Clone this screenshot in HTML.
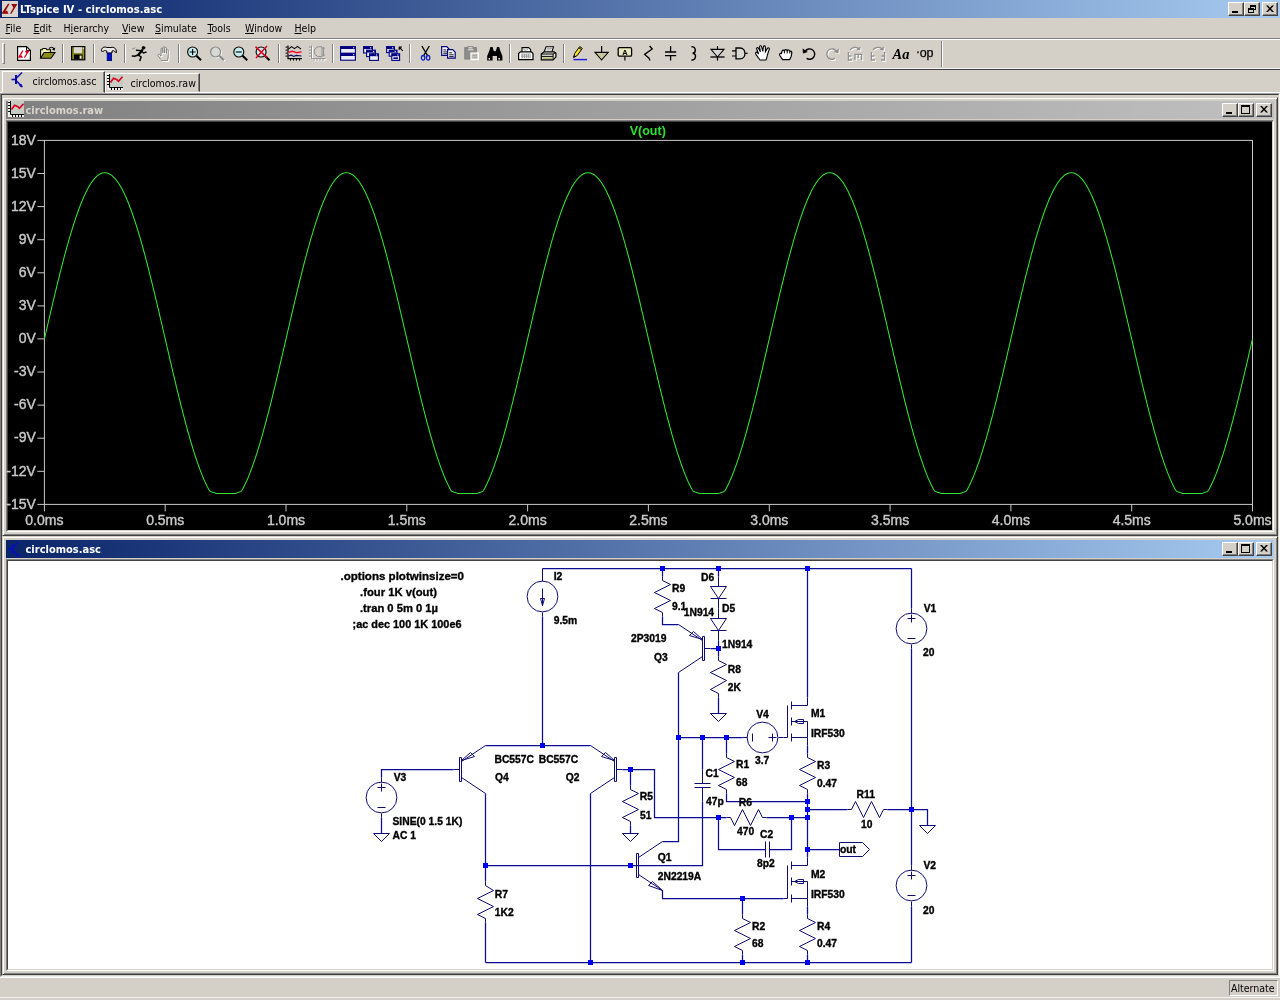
<!DOCTYPE html><html><head><meta charset="utf-8"><title>LTspice IV - circlomos.asc</title><style>

html,body{margin:0;padding:0}
body{width:1280px;height:1000px;overflow:hidden;background:#d4d0c8;position:relative;font-family:"DejaVu Sans Condensed","Liberation Sans",sans-serif;font-size:10.5px;color:#000}
.abs{position:absolute}
.t{position:absolute;white-space:pre;line-height:1}
.tb{position:absolute;left:0;top:0;width:1280px;height:18px;background:linear-gradient(90deg,#0a246a 0%,#a6caf0 100%)}
.btn{position:absolute;width:16px;height:14px;background:#d4d0c8;box-sizing:border-box;border:1px solid;border-color:#fff #404040 #404040 #fff;box-shadow:inset -1px -1px 0 #808080}
.menu span{position:absolute;top:22px;white-space:pre;line-height:12px}
u{text-decoration:underline}
.sep{position:absolute;top:44px;width:1px;height:19px;background:#808080;border-right:1px solid #fff}
svg{position:absolute;left:0;top:0;overflow:visible}
.sch text{font-family:"Liberation Sans",sans-serif;font-weight:bold;font-size:10.3px;fill:#000;stroke:#000;stroke-width:.35px}
.sch text.d{font-size:11.6px}

</style></head><body><div id="root" style="position:absolute;left:0;top:0;width:1280px;height:1000px;overflow:hidden;will-change:transform">
<div class="tb"></div>
<div class="t" style="left:20px;top:4px;font-weight:bold;font-size:11.2px;color:#fff">LTspice IV - circlomos.asc</div>
<div class="btn" style="left:1228px;top:2px"></div>
<div class="btn" style="left:1244px;top:2px"></div>
<div class="btn" style="left:1262px;top:2px"></div>
<div class="menu">
<span style="left:5.5px"><u>F</u>ile</span>
<span style="left:33.5px"><u>E</u>dit</span>
<span style="left:63.5px">H<u>i</u>erarchy</span>
<span style="left:122px"><u>V</u>iew</span>
<span style="left:155px"><u>S</u>imulate</span>
<span style="left:207.5px"><u>T</u>ools</span>
<span style="left:245px"><u>W</u>indow</span>
<span style="left:294.5px"><u>H</u>elp</span>
</div>
<div class="abs" style="left:0;top:38px;width:1280px;height:1px;background:#808080"></div>
<div class="abs" style="left:0;top:39px;width:1280px;height:1px;background:#fff"></div>
<div class="abs" style="left:0;top:68px;width:1280px;height:1px;background:#f4f4f0"></div>
<div class="abs" style="left:0;top:69px;width:1280px;height:1px;background:#404040"></div>
<div class="abs" style="left:2px;top:43px;width:3px;height:21px;box-sizing:border-box;border:1px solid;border-color:#fff #808080 #808080 #fff"></div>
<div class="abs" style="left:941px;top:41px;width:1px;height:26px;background:#808080;border-right:1px solid #fff"></div>
<div class="sep" style="left:62px"></div>
<div class="sep" style="left:93px"></div>
<div class="sep" style="left:124px"></div>
<div class="sep" style="left:178px"></div>
<div class="sep" style="left:278px"></div>
<div class="sep" style="left:332px"></div>
<div class="sep" style="left:409px"></div>
<div class="sep" style="left:509px"></div>
<div class="sep" style="left:563px"></div>
<div class="abs" style="left:0;top:92px;width:1280px;height:1px;background:#fff"></div>
<div class="abs" style="left:105px;top:73px;width:95px;height:19px;box-sizing:border-box;border:1px solid;border-color:#fff #404040 #d4d0c8 #fff;box-shadow:inset -1px 0 0 #808080;background:#d4d0c8"></div>
<div class="abs" style="left:2px;top:71px;width:103px;height:22px;box-sizing:border-box;border:1px solid;border-color:#fff #404040 #d4d0c8 #fff;box-shadow:inset -1px 0 0 #808080;background:#d4d0c8"></div>
<div class="t" style="left:32.5px;top:76px;font-size:10.5px">circlomos.asc</div>
<div class="t" style="left:130.5px;top:78px;font-size:10.5px">circlomos.raw</div>
<div class="abs" style="left:0;top:93px;width:1280px;height:884px;box-sizing:border-box;border:1px solid;border-color:#a0a0a0 #fff #f0eeea #808080"></div>
<div class="abs" style="left:1px;top:94px;width:1278px;height:882px;box-sizing:border-box;border:1px solid;border-color:#404040 #d4d0c8 #d4d0c8 #404040;background:#d4d0c8"></div>
<div class="abs" style="left:2px;top:97px;width:1276px;height:439px;background:#d4d0c8;box-sizing:border-box;border:1px solid;border-color:#d4d0c8 #404040 #404040 #d4d0c8;box-shadow:inset 1px 1px 0 #fff,inset -1px -1px 0 #808080"></div>
<div class="abs" style="left:6px;top:101px;width:1268px;height:18px;background:linear-gradient(90deg,#808080,#c0c0c0)"></div>
<div class="t" style="left:25.5px;top:105px;font-weight:bold;font-size:11px;color:#d8d4cc">circlomos.raw</div>
<div class="btn" style="left:1222px;top:103px"></div>
<div class="btn" style="left:1238px;top:103px"></div>
<div class="btn" style="left:1256px;top:103px"></div>
<div class="abs" style="left:6px;top:120px;width:1268px;height:412px;box-sizing:border-box;border:1px solid;border-color:#808080 #fff #fff #808080"><div style="width:1266px;height:410px;box-sizing:border-box;border:1px solid;border-color:#404040 #d4d0c8 #d4d0c8 #404040;background:#000"></div></div>
<div class="abs" style="left:2px;top:536px;width:1276px;height:439px;background:#d4d0c8;box-sizing:border-box;border:1px solid;border-color:#d4d0c8 #404040 #404040 #d4d0c8;box-shadow:inset 1px 1px 0 #fff,inset -1px -1px 0 #808080"></div>
<div class="abs" style="left:6px;top:540px;width:1268px;height:18px;background:linear-gradient(90deg,#0a246a,#a6caf0)"></div>
<div class="t" style="left:25.5px;top:544px;font-weight:bold;font-size:11px;color:#fff">circlomos.asc</div>
<div class="btn" style="left:1222px;top:542px"></div>
<div class="btn" style="left:1238px;top:542px"></div>
<div class="btn" style="left:1256px;top:542px"></div>
<div class="abs" style="left:6px;top:559px;width:1268px;height:412px;box-sizing:border-box;border:1px solid;border-color:#808080 #fff #fff #808080"><div style="width:1266px;height:410px;box-sizing:border-box;border:1px solid;border-color:#404040 #d4d0c8 #d4d0c8 #404040;background:#fff"></div></div>
<div class="abs" style="left:0;top:977px;width:1280px;height:1px;background:#fff"></div>
<div class="abs" style="left:1229px;top:980px;width:49px;height:16px;box-sizing:border-box;border:1px solid;border-color:#808080 #fff #fff #808080"></div>
<div class="t" style="left:1231px;top:982.5px;font-size:10.5px">Alternate</div>
<div class="abs" style="left:0;top:997px;width:1280px;height:1px;background:#f4f4f2"></div>
<svg width="1280" height="1000" viewBox="0 0 1280 1000">
<g fill="none" stroke="#c8c8c8" stroke-width="1">
<rect x="44.4" y="140.4" width="1208.1" height="364.0"/>
<path d="M37.4 140.4H44.4M37.4 173.5H44.4M37.4 206.6H44.4M37.4 239.7H44.4M37.4 272.8H44.4M37.4 305.9H44.4M37.4 338.9H44.4M37.4 372.0H44.4M37.4 405.1H44.4M37.4 438.2H44.4M37.4 471.3H44.4M37.4 504.4H44.4M44.4 504.4V511.4M165.2 504.4V511.4M286.0 504.4V511.4M406.8 504.4V511.4M527.6 504.4V511.4M648.4 504.4V511.4M769.3 504.4V511.4M890.1 504.4V511.4M1010.9 504.4V511.4M1131.7 504.4V511.4M1252.5 504.4V511.4"/></g>
<path d="M44.4 338.9L45.3 335.2L46.1 331.5L47.0 327.8L47.9 324.0L48.7 320.3L49.6 316.6L50.4 312.9L51.3 309.3L52.2 305.6L53.0 302.0L53.9 298.3L54.8 294.7L55.6 291.1L56.5 287.6L57.3 284.0L58.2 280.5L59.1 277.1L59.9 273.6L60.8 270.2L61.7 266.8L62.5 263.5L63.4 260.2L64.2 256.9L65.1 253.7L66.0 250.5L66.8 247.4L67.7 244.3L68.6 241.2L69.4 238.2L70.3 235.3L71.2 232.4L72.0 229.6L72.9 226.8L73.7 224.1L74.6 221.4L75.5 218.8L76.3 216.3L77.2 213.8L78.1 211.3L78.9 209.0L79.8 206.7L80.6 204.5L81.5 202.3L82.4 200.2L83.2 198.2L84.1 196.2L85.0 194.4L85.8 192.6L86.7 190.8L87.5 189.2L88.4 187.6L89.3 186.1L90.1 184.7L91.0 183.3L91.9 182.0L92.7 180.9L93.6 179.7L94.4 178.7L95.3 177.8L96.2 176.9L97.0 176.1L97.9 175.4L98.8 174.8L99.6 174.2L100.5 173.8L101.4 173.4L102.2 173.1L103.1 172.9L103.9 172.8L104.8 172.7L105.7 172.8L106.5 172.9L107.4 173.1L108.3 173.4L109.1 173.8L110.0 174.2L110.8 174.8L111.7 175.4L112.6 176.1L113.4 176.9L114.3 177.8L115.2 178.7L116.0 179.7L116.9 180.9L117.7 182.0L118.6 183.3L119.5 184.7L120.3 186.1L121.2 187.6L122.1 189.2L122.9 190.8L123.8 192.6L124.7 194.4L125.5 196.2L126.4 198.2L127.2 200.2L128.1 202.3L129.0 204.5L129.8 206.7L130.7 209.0L131.6 211.3L132.4 213.8L133.3 216.3L134.1 218.8L135.0 221.4L135.9 224.1L136.7 226.8L137.6 229.6L138.5 232.4L139.3 235.3L140.2 238.2L141.0 241.2L141.9 244.3L142.8 247.4L143.6 250.5L144.5 253.7L145.4 256.9L146.2 260.2L147.1 263.5L148.0 266.8L148.8 270.2L149.7 273.6L150.5 277.1L151.4 280.5L152.3 284.0L153.1 287.6L154.0 291.1L154.9 294.7L155.7 298.3L156.6 302.0L157.4 305.6L158.3 309.3L159.2 312.9L160.0 316.6L160.9 320.3L161.8 324.0L162.6 327.8L163.5 331.5L164.3 335.2L165.2 338.9L166.1 342.7L166.9 346.4L167.8 350.1L168.7 353.8L169.5 357.6L170.4 361.3L171.3 364.9L172.1 368.6L173.0 372.3L173.8 375.9L174.7 379.6L175.6 383.2L176.4 386.8L177.3 390.3L178.2 393.8L179.0 397.4L179.9 400.8L180.7 404.3L181.6 407.7L182.5 411.1L183.3 414.4L184.2 417.7L185.1 421.0L185.9 424.2L186.8 427.4L187.6 430.5L188.5 433.6L189.4 436.7L190.2 439.6L191.1 442.6L192.0 445.5L192.8 448.3L193.7 451.1L194.5 453.8L195.4 456.5L196.3 459.1L197.1 461.6L198.0 464.1L198.9 466.5L199.7 468.9L200.6 471.2L201.5 473.4L202.3 475.6L203.2 477.7L204.0 479.7L204.9 481.6L205.8 483.5L206.6 485.3L207.5 487.1L208.4 488.7L209.2 490.3L210.1 491.3L210.9 491.6L211.8 491.9L212.7 492.2L213.5 492.5L214.4 492.8L215.3 493.1L216.1 493.4L217.0 493.5L217.8 493.5L218.7 493.5L219.6 493.5L220.4 493.5L221.3 493.5L222.2 493.5L223.0 493.5L223.9 493.5L224.8 493.5L225.6 493.5L226.5 493.5L227.3 493.5L228.2 493.5L229.1 493.5L229.9 493.5L230.8 493.5L231.7 493.5L232.5 493.5L233.4 493.5L234.2 493.5L235.1 493.5L236.0 493.2L236.8 492.9L237.7 492.6L238.6 492.3L239.4 492.0L240.3 491.7L241.1 491.4L242.0 490.3L242.9 488.7L243.7 487.1L244.6 485.3L245.5 483.5L246.3 481.6L247.2 479.7L248.1 477.7L248.9 475.6L249.8 473.4L250.6 471.2L251.5 468.9L252.4 466.5L253.2 464.1L254.1 461.6L255.0 459.1L255.8 456.5L256.7 453.8L257.5 451.1L258.4 448.3L259.3 445.5L260.1 442.6L261.0 439.6L261.9 436.7L262.7 433.6L263.6 430.5L264.4 427.4L265.3 424.2L266.2 421.0L267.0 417.7L267.9 414.4L268.8 411.1L269.6 407.7L270.5 404.3L271.4 400.8L272.2 397.4L273.1 393.8L273.9 390.3L274.8 386.8L275.7 383.2L276.5 379.6L277.4 375.9L278.3 372.3L279.1 368.6L280.0 364.9L280.8 361.3L281.7 357.6L282.6 353.8L283.4 350.1L284.3 346.4L285.2 342.7L286.0 338.9L286.9 335.2L287.7 331.5L288.6 327.8L289.5 324.0L290.3 320.3L291.2 316.6L292.1 312.9L292.9 309.3L293.8 305.6L294.6 302.0L295.5 298.3L296.4 294.7L297.2 291.1L298.1 287.6L299.0 284.0L299.8 280.5L300.7 277.1L301.6 273.6L302.4 270.2L303.3 266.8L304.1 263.5L305.0 260.2L305.9 256.9L306.7 253.7L307.6 250.5L308.5 247.4L309.3 244.3L310.2 241.2L311.0 238.2L311.9 235.3L312.8 232.4L313.6 229.6L314.5 226.8L315.4 224.1L316.2 221.4L317.1 218.8L317.9 216.3L318.8 213.8L319.7 211.3L320.5 209.0L321.4 206.7L322.3 204.5L323.1 202.3L324.0 200.2L324.9 198.2L325.7 196.2L326.6 194.4L327.4 192.6L328.3 190.8L329.2 189.2L330.0 187.6L330.9 186.1L331.8 184.7L332.6 183.3L333.5 182.0L334.3 180.9L335.2 179.7L336.1 178.7L336.9 177.8L337.8 176.9L338.7 176.1L339.5 175.4L340.4 174.8L341.2 174.2L342.1 173.8L343.0 173.4L343.8 173.1L344.7 172.9L345.6 172.8L346.4 172.7L347.3 172.8L348.2 172.9L349.0 173.1L349.9 173.4L350.7 173.8L351.6 174.2L352.5 174.8L353.3 175.4L354.2 176.1L355.1 176.9L355.9 177.8L356.8 178.7L357.6 179.7L358.5 180.9L359.4 182.0L360.2 183.3L361.1 184.7L362.0 186.1L362.8 187.6L363.7 189.2L364.5 190.8L365.4 192.6L366.3 194.4L367.1 196.2L368.0 198.2L368.9 200.2L369.7 202.3L370.6 204.5L371.4 206.7L372.3 209.0L373.2 211.3L374.0 213.8L374.9 216.3L375.8 218.8L376.6 221.4L377.5 224.1L378.4 226.8L379.2 229.6L380.1 232.4L380.9 235.3L381.8 238.2L382.7 241.2L383.5 244.3L384.4 247.4L385.3 250.5L386.1 253.7L387.0 256.9L387.8 260.2L388.7 263.5L389.6 266.8L390.4 270.2L391.3 273.6L392.2 277.1L393.0 280.5L393.9 284.0L394.7 287.6L395.6 291.1L396.5 294.7L397.3 298.3L398.2 302.0L399.1 305.6L399.9 309.3L400.8 312.9L401.7 316.6L402.5 320.3L403.4 324.0L404.2 327.8L405.1 331.5L406.0 335.2L406.8 338.9L407.7 342.7L408.6 346.4L409.4 350.1L410.3 353.8L411.1 357.6L412.0 361.3L412.9 364.9L413.7 368.6L414.6 372.3L415.5 375.9L416.3 379.6L417.2 383.2L418.0 386.8L418.9 390.3L419.8 393.8L420.6 397.4L421.5 400.8L422.4 404.3L423.2 407.7L424.1 411.1L425.0 414.4L425.8 417.7L426.7 421.0L427.5 424.2L428.4 427.4L429.3 430.5L430.1 433.6L431.0 436.7L431.9 439.6L432.7 442.6L433.6 445.5L434.4 448.3L435.3 451.1L436.2 453.8L437.0 456.5L437.9 459.1L438.8 461.6L439.6 464.1L440.5 466.5L441.3 468.9L442.2 471.2L443.1 473.4L443.9 475.6L444.8 477.7L445.7 479.7L446.5 481.6L447.4 483.5L448.3 485.3L449.1 487.1L450.0 488.7L450.8 490.3L451.7 491.3L452.6 491.6L453.4 491.9L454.3 492.2L455.2 492.5L456.0 492.8L456.9 493.1L457.7 493.4L458.6 493.5L459.5 493.5L460.3 493.5L461.2 493.5L462.1 493.5L462.9 493.5L463.8 493.5L464.6 493.5L465.5 493.5L466.4 493.5L467.2 493.5L468.1 493.5L469.0 493.5L469.8 493.5L470.7 493.5L471.5 493.5L472.4 493.5L473.3 493.5L474.1 493.5L475.0 493.5L475.9 493.5L476.7 493.5L477.6 493.2L478.5 492.9L479.3 492.6L480.2 492.3L481.0 492.0L481.9 491.7L482.8 491.4L483.6 490.3L484.5 488.7L485.4 487.1L486.2 485.3L487.1 483.5L487.9 481.6L488.8 479.7L489.7 477.7L490.5 475.6L491.4 473.4L492.3 471.2L493.1 468.9L494.0 466.5L494.8 464.1L495.7 461.6L496.6 459.1L497.4 456.5L498.3 453.8L499.2 451.1L500.0 448.3L500.9 445.5L501.8 442.6L502.6 439.6L503.5 436.7L504.3 433.6L505.2 430.5L506.1 427.4L506.9 424.2L507.8 421.0L508.7 417.7L509.5 414.4L510.4 411.1L511.2 407.7L512.1 404.3L513.0 400.8L513.8 397.4L514.7 393.8L515.6 390.3L516.4 386.8L517.3 383.2L518.1 379.6L519.0 375.9L519.9 372.3L520.7 368.6L521.6 364.9L522.5 361.3L523.3 357.6L524.2 353.8L525.1 350.1L525.9 346.4L526.8 342.7L527.6 338.9L528.5 335.2L529.4 331.5L530.2 327.8L531.1 324.0L532.0 320.3L532.8 316.6L533.7 312.9L534.5 309.3L535.4 305.6L536.3 302.0L537.1 298.3L538.0 294.7L538.9 291.1L539.7 287.6L540.6 284.0L541.4 280.5L542.3 277.1L543.2 273.6L544.0 270.2L544.9 266.8L545.8 263.5L546.6 260.2L547.5 256.9L548.4 253.7L549.2 250.5L550.1 247.4L550.9 244.3L551.8 241.2L552.7 238.2L553.5 235.3L554.4 232.4L555.3 229.6L556.1 226.8L557.0 224.1L557.8 221.4L558.7 218.8L559.6 216.3L560.4 213.8L561.3 211.3L562.2 209.0L563.0 206.7L563.9 204.5L564.7 202.3L565.6 200.2L566.5 198.2L567.3 196.2L568.2 194.4L569.1 192.6L569.9 190.8L570.8 189.2L571.6 187.6L572.5 186.1L573.4 184.7L574.2 183.3L575.1 182.0L576.0 180.9L576.8 179.7L577.7 178.7L578.6 177.8L579.4 176.9L580.3 176.1L581.1 175.4L582.0 174.8L582.9 174.2L583.7 173.8L584.6 173.4L585.5 173.1L586.3 172.9L587.2 172.8L588.0 172.7L588.9 172.8L589.8 172.9L590.6 173.1L591.5 173.4L592.4 173.8L593.2 174.2L594.1 174.8L594.9 175.4L595.8 176.1L596.7 176.9L597.5 177.8L598.4 178.7L599.3 179.7L600.1 180.9L601.0 182.0L601.9 183.3L602.7 184.7L603.6 186.1L604.4 187.6L605.3 189.2L606.2 190.8L607.0 192.6L607.9 194.4L608.8 196.2L609.6 198.2L610.5 200.2L611.3 202.3L612.2 204.5L613.1 206.7L613.9 209.0L614.8 211.3L615.7 213.8L616.5 216.3L617.4 218.8L618.2 221.4L619.1 224.1L620.0 226.8L620.8 229.6L621.7 232.4L622.6 235.3L623.4 238.2L624.3 241.2L625.2 244.3L626.0 247.4L626.9 250.5L627.7 253.7L628.6 256.9L629.5 260.2L630.3 263.5L631.2 266.8L632.1 270.2L632.9 273.6L633.8 277.1L634.6 280.5L635.5 284.0L636.4 287.6L637.2 291.1L638.1 294.7L639.0 298.3L639.8 302.0L640.7 305.6L641.5 309.3L642.4 312.9L643.3 316.6L644.1 320.3L645.0 324.0L645.9 327.8L646.7 331.5L647.6 335.2L648.4 338.9L649.3 342.7L650.2 346.4L651.0 350.1L651.9 353.8L652.8 357.6L653.6 361.3L654.5 364.9L655.4 368.6L656.2 372.3L657.1 375.9L657.9 379.6L658.8 383.2L659.7 386.8L660.5 390.3L661.4 393.8L662.3 397.4L663.1 400.8L664.0 404.3L664.8 407.7L665.7 411.1L666.6 414.4L667.4 417.7L668.3 421.0L669.2 424.2L670.0 427.4L670.9 430.5L671.7 433.6L672.6 436.7L673.5 439.6L674.3 442.6L675.2 445.5L676.1 448.3L676.9 451.1L677.8 453.8L678.7 456.5L679.5 459.1L680.4 461.6L681.2 464.1L682.1 466.5L683.0 468.9L683.8 471.2L684.7 473.4L685.6 475.6L686.4 477.7L687.3 479.7L688.1 481.6L689.0 483.5L689.9 485.3L690.7 487.1L691.6 488.7L692.5 490.3L693.3 491.3L694.2 491.6L695.0 491.9L695.9 492.2L696.8 492.5L697.6 492.8L698.5 493.1L699.4 493.4L700.2 493.5L701.1 493.5L702.0 493.5L702.8 493.5L703.7 493.5L704.5 493.5L705.4 493.5L706.3 493.5L707.1 493.5L708.0 493.5L708.9 493.5L709.7 493.5L710.6 493.5L711.4 493.5L712.3 493.5L713.2 493.5L714.0 493.5L714.9 493.5L715.8 493.5L716.6 493.5L717.5 493.5L718.3 493.5L719.2 493.2L720.1 492.9L720.9 492.6L721.8 492.3L722.7 492.0L723.5 491.7L724.4 491.4L725.3 490.3L726.1 488.7L727.0 487.1L727.8 485.3L728.7 483.5L729.6 481.6L730.4 479.7L731.3 477.7L732.2 475.6L733.0 473.4L733.9 471.2L734.7 468.9L735.6 466.5L736.5 464.1L737.3 461.6L738.2 459.1L739.1 456.5L739.9 453.8L740.8 451.1L741.6 448.3L742.5 445.5L743.4 442.6L744.2 439.6L745.1 436.7L746.0 433.6L746.8 430.5L747.7 427.4L748.5 424.2L749.4 421.0L750.3 417.7L751.1 414.4L752.0 411.1L752.9 407.7L753.7 404.3L754.6 400.8L755.5 397.4L756.3 393.8L757.2 390.3L758.0 386.8L758.9 383.2L759.8 379.6L760.6 375.9L761.5 372.3L762.4 368.6L763.2 364.9L764.1 361.3L764.9 357.6L765.8 353.8L766.7 350.1L767.5 346.4L768.4 342.7L769.3 338.9L770.1 335.2L771.0 331.5L771.8 327.8L772.7 324.0L773.6 320.3L774.4 316.6L775.3 312.9L776.2 309.3L777.0 305.6L777.9 302.0L778.8 298.3L779.6 294.7L780.5 291.1L781.3 287.6L782.2 284.0L783.1 280.5L783.9 277.1L784.8 273.6L785.7 270.2L786.5 266.8L787.4 263.5L788.2 260.2L789.1 256.9L790.0 253.7L790.8 250.5L791.7 247.4L792.6 244.3L793.4 241.2L794.3 238.2L795.1 235.3L796.0 232.4L796.9 229.6L797.7 226.8L798.6 224.1L799.5 221.4L800.3 218.8L801.2 216.3L802.1 213.8L802.9 211.3L803.8 209.0L804.6 206.7L805.5 204.5L806.4 202.3L807.2 200.2L808.1 198.2L809.0 196.2L809.8 194.4L810.7 192.6L811.5 190.8L812.4 189.2L813.3 187.6L814.1 186.1L815.0 184.7L815.9 183.3L816.7 182.0L817.6 180.9L818.4 179.7L819.3 178.7L820.2 177.8L821.0 176.9L821.9 176.1L822.8 175.4L823.6 174.8L824.5 174.2L825.4 173.8L826.2 173.4L827.1 173.1L827.9 172.9L828.8 172.8L829.7 172.7L830.5 172.8L831.4 172.9L832.3 173.1L833.1 173.4L834.0 173.8L834.8 174.2L835.7 174.8L836.6 175.4L837.4 176.1L838.3 176.9L839.2 177.8L840.0 178.7L840.9 179.7L841.7 180.9L842.6 182.0L843.5 183.3L844.3 184.7L845.2 186.1L846.1 187.6L846.9 189.2L847.8 190.8L848.6 192.6L849.5 194.4L850.4 196.2L851.2 198.2L852.1 200.2L853.0 202.3L853.8 204.5L854.7 206.7L855.6 209.0L856.4 211.3L857.3 213.8L858.1 216.3L859.0 218.8L859.9 221.4L860.7 224.1L861.6 226.8L862.5 229.6L863.3 232.4L864.2 235.3L865.0 238.2L865.9 241.2L866.8 244.3L867.6 247.4L868.5 250.5L869.4 253.7L870.2 256.9L871.1 260.2L871.9 263.5L872.8 266.8L873.7 270.2L874.5 273.6L875.4 277.1L876.3 280.5L877.1 284.0L878.0 287.6L878.9 291.1L879.7 294.7L880.6 298.3L881.4 302.0L882.3 305.6L883.2 309.3L884.0 312.9L884.9 316.6L885.8 320.3L886.6 324.0L887.5 327.8L888.3 331.5L889.2 335.2L890.1 338.9L890.9 342.7L891.8 346.4L892.7 350.1L893.5 353.8L894.4 357.6L895.2 361.3L896.1 364.9L897.0 368.6L897.8 372.3L898.7 375.9L899.6 379.6L900.4 383.2L901.3 386.8L902.2 390.3L903.0 393.8L903.9 397.4L904.7 400.8L905.6 404.3L906.5 407.7L907.3 411.1L908.2 414.4L909.1 417.7L909.9 421.0L910.8 424.2L911.6 427.4L912.5 430.5L913.4 433.6L914.2 436.7L915.1 439.6L916.0 442.6L916.8 445.5L917.7 448.3L918.5 451.1L919.4 453.8L920.3 456.5L921.1 459.1L922.0 461.6L922.9 464.1L923.7 466.5L924.6 468.9L925.5 471.2L926.3 473.4L927.2 475.6L928.0 477.7L928.9 479.7L929.8 481.6L930.6 483.5L931.5 485.3L932.4 487.1L933.2 488.7L934.1 490.3L934.9 491.3L935.8 491.6L936.7 491.9L937.5 492.2L938.4 492.5L939.3 492.8L940.1 493.1L941.0 493.4L941.8 493.5L942.7 493.5L943.6 493.5L944.4 493.5L945.3 493.5L946.2 493.5L947.0 493.5L947.9 493.5L948.7 493.5L949.6 493.5L950.5 493.5L951.3 493.5L952.2 493.5L953.1 493.5L953.9 493.5L954.8 493.5L955.7 493.5L956.5 493.5L957.4 493.5L958.2 493.5L959.1 493.5L960.0 493.5L960.8 493.2L961.7 492.9L962.6 492.6L963.4 492.3L964.3 492.0L965.1 491.7L966.0 491.4L966.9 490.3L967.7 488.7L968.6 487.1L969.5 485.3L970.3 483.5L971.2 481.6L972.0 479.7L972.9 477.7L973.8 475.6L974.6 473.4L975.5 471.2L976.4 468.9L977.2 466.5L978.1 464.1L979.0 461.6L979.8 459.1L980.7 456.5L981.5 453.8L982.4 451.1L983.3 448.3L984.1 445.5L985.0 442.6L985.9 439.6L986.7 436.7L987.6 433.6L988.4 430.5L989.3 427.4L990.2 424.2L991.0 421.0L991.9 417.7L992.8 414.4L993.6 411.1L994.5 407.7L995.3 404.3L996.2 400.8L997.1 397.4L997.9 393.8L998.8 390.3L999.7 386.8L1000.5 383.2L1001.4 379.6L1002.3 375.9L1003.1 372.3L1004.0 368.6L1004.8 364.9L1005.7 361.3L1006.6 357.6L1007.4 353.8L1008.3 350.1L1009.2 346.4L1010.0 342.7L1010.9 338.9L1011.7 335.2L1012.6 331.5L1013.5 327.8L1014.3 324.0L1015.2 320.3L1016.1 316.6L1016.9 312.9L1017.8 309.3L1018.6 305.6L1019.5 302.0L1020.4 298.3L1021.2 294.7L1022.1 291.1L1023.0 287.6L1023.8 284.0L1024.7 280.5L1025.5 277.1L1026.4 273.6L1027.3 270.2L1028.1 266.8L1029.0 263.5L1029.9 260.2L1030.7 256.9L1031.6 253.7L1032.5 250.5L1033.3 247.4L1034.2 244.3L1035.0 241.2L1035.9 238.2L1036.8 235.3L1037.6 232.4L1038.5 229.6L1039.4 226.8L1040.2 224.1L1041.1 221.4L1041.9 218.8L1042.8 216.3L1043.7 213.8L1044.5 211.3L1045.4 209.0L1046.3 206.7L1047.1 204.5L1048.0 202.3L1048.8 200.2L1049.7 198.2L1050.6 196.2L1051.4 194.4L1052.3 192.6L1053.2 190.8L1054.0 189.2L1054.9 187.6L1055.8 186.1L1056.6 184.7L1057.5 183.3L1058.3 182.0L1059.2 180.9L1060.1 179.7L1060.9 178.7L1061.8 177.8L1062.7 176.9L1063.5 176.1L1064.4 175.4L1065.2 174.8L1066.1 174.2L1067.0 173.8L1067.8 173.4L1068.7 173.1L1069.6 172.9L1070.4 172.8L1071.3 172.7L1072.1 172.8L1073.0 172.9L1073.9 173.1L1074.7 173.4L1075.6 173.8L1076.5 174.2L1077.3 174.8L1078.2 175.4L1079.1 176.1L1079.9 176.9L1080.8 177.8L1081.6 178.7L1082.5 179.7L1083.4 180.9L1084.2 182.0L1085.1 183.3L1086.0 184.7L1086.8 186.1L1087.7 187.6L1088.5 189.2L1089.4 190.8L1090.3 192.6L1091.1 194.4L1092.0 196.2L1092.9 198.2L1093.7 200.2L1094.6 202.3L1095.4 204.5L1096.3 206.7L1097.2 209.0L1098.0 211.3L1098.9 213.8L1099.8 216.3L1100.6 218.8L1101.5 221.4L1102.4 224.1L1103.2 226.8L1104.1 229.6L1104.9 232.4L1105.8 235.3L1106.7 238.2L1107.5 241.2L1108.4 244.3L1109.3 247.4L1110.1 250.5L1111.0 253.7L1111.8 256.9L1112.7 260.2L1113.6 263.5L1114.4 266.8L1115.3 270.2L1116.2 273.6L1117.0 277.1L1117.9 280.5L1118.7 284.0L1119.6 287.6L1120.5 291.1L1121.3 294.7L1122.2 298.3L1123.1 302.0L1123.9 305.6L1124.8 309.3L1125.6 312.9L1126.5 316.6L1127.4 320.3L1128.2 324.0L1129.1 327.8L1130.0 331.5L1130.8 335.2L1131.7 338.9L1132.6 342.7L1133.4 346.4L1134.3 350.1L1135.1 353.8L1136.0 357.6L1136.9 361.3L1137.7 364.9L1138.6 368.6L1139.5 372.3L1140.3 375.9L1141.2 379.6L1142.0 383.2L1142.9 386.8L1143.8 390.3L1144.6 393.8L1145.5 397.4L1146.4 400.8L1147.2 404.3L1148.1 407.7L1148.9 411.1L1149.8 414.4L1150.7 417.7L1151.5 421.0L1152.4 424.2L1153.3 427.4L1154.1 430.5L1155.0 433.6L1155.9 436.7L1156.7 439.6L1157.6 442.6L1158.4 445.5L1159.3 448.3L1160.2 451.1L1161.0 453.8L1161.9 456.5L1162.8 459.1L1163.6 461.6L1164.5 464.1L1165.3 466.5L1166.2 468.9L1167.1 471.2L1167.9 473.4L1168.8 475.6L1169.7 477.7L1170.5 479.7L1171.4 481.6L1172.2 483.5L1173.1 485.3L1174.0 487.1L1174.8 488.7L1175.7 490.3L1176.6 491.3L1177.4 491.6L1178.3 491.9L1179.2 492.2L1180.0 492.5L1180.9 492.8L1181.7 493.1L1182.6 493.4L1183.5 493.5L1184.3 493.5L1185.2 493.5L1186.1 493.5L1186.9 493.5L1187.8 493.5L1188.6 493.5L1189.5 493.5L1190.4 493.5L1191.2 493.5L1192.1 493.5L1193.0 493.5L1193.8 493.5L1194.7 493.5L1195.5 493.5L1196.4 493.5L1197.3 493.5L1198.1 493.5L1199.0 493.5L1199.9 493.5L1200.7 493.5L1201.6 493.5L1202.5 493.2L1203.3 492.9L1204.2 492.6L1205.0 492.3L1205.9 492.0L1206.8 491.7L1207.6 491.4L1208.5 490.3L1209.4 488.7L1210.2 487.1L1211.1 485.3L1211.9 483.5L1212.8 481.6L1213.7 479.7L1214.5 477.7L1215.4 475.6L1216.3 473.4L1217.1 471.2L1218.0 468.9L1218.8 466.5L1219.7 464.1L1220.6 461.6L1221.4 459.1L1222.3 456.5L1223.2 453.8L1224.0 451.1L1224.9 448.3L1225.7 445.5L1226.6 442.6L1227.5 439.6L1228.3 436.7L1229.2 433.6L1230.1 430.5L1230.9 427.4L1231.8 424.2L1232.7 421.0L1233.5 417.7L1234.4 414.4L1235.2 411.1L1236.1 407.7L1237.0 404.3L1237.8 400.8L1238.7 397.4L1239.6 393.8L1240.4 390.3L1241.3 386.8L1242.1 383.2L1243.0 379.6L1243.9 375.9L1244.7 372.3L1245.6 368.6L1246.5 364.9L1247.3 361.3L1248.2 357.6L1249.0 353.8L1249.9 350.1L1250.8 346.4L1251.6 342.7L1252.5 338.9" fill="none" stroke="#34e434" stroke-width="1.05"/>
<g font-family='"Liberation Sans",sans-serif' font-size="14" fill="#c8c8c8" stroke="#c8c8c8" stroke-width=".4">
<text x="35.9" y="144.6" text-anchor="end">18V</text>
<text x="35.9" y="177.7" text-anchor="end">15V</text>
<text x="35.9" y="210.8" text-anchor="end">12V</text>
<text x="35.9" y="243.9" text-anchor="end">9V</text>
<text x="35.9" y="277.0" text-anchor="end">6V</text>
<text x="35.9" y="310.1" text-anchor="end">3V</text>
<text x="35.9" y="343.1" text-anchor="end">0V</text>
<text x="35.9" y="376.2" text-anchor="end">-3V</text>
<text x="35.9" y="409.3" text-anchor="end">-6V</text>
<text x="35.9" y="442.4" text-anchor="end">-9V</text>
<text x="35.9" y="475.5" text-anchor="end">-12V</text>
<text x="35.9" y="508.6" text-anchor="end">-15V</text>
<text x="44.4" y="524.6" text-anchor="middle">0.0ms</text>
<text x="165.2" y="524.6" text-anchor="middle">0.5ms</text>
<text x="286.0" y="524.6" text-anchor="middle">1.0ms</text>
<text x="406.8" y="524.6" text-anchor="middle">1.5ms</text>
<text x="527.6" y="524.6" text-anchor="middle">2.0ms</text>
<text x="648.4" y="524.6" text-anchor="middle">2.5ms</text>
<text x="769.3" y="524.6" text-anchor="middle">3.0ms</text>
<text x="890.1" y="524.6" text-anchor="middle">3.5ms</text>
<text x="1010.9" y="524.6" text-anchor="middle">4.0ms</text>
<text x="1131.7" y="524.6" text-anchor="middle">4.5ms</text>
<text x="1252.5" y="524.6" text-anchor="middle">5.0ms</text>
</g>
<text x="647.8" y="134.8" text-anchor="middle" font-family='"Liberation Sans",sans-serif' font-weight="bold" font-size="12.5" fill="#30e030">V(out)</text>
</svg>
<svg class="sch" width="1280" height="1000" viewBox="0 0 1280 1000">
<path d="M542.5 568.5L911.5 568.5M542.5 616.5L542.5 745.5M485.5 745.5L590.5 745.5M381.5 777.5L381.5 769.5L453.5 769.5M381.5 817.5L381.5 833.5M485.5 793.5L485.5 865.5M485.5 865.5L485.5 881.5M485.5 922.5L485.5 962.5M485.5 962.5L911.5 962.5M590.5 793.5L590.5 962.5M622.5 769.5L654.5 769.5L654.5 817.5L726.5 817.5M630.5 769.5L630.5 785.5M630.5 825.5L630.5 833.5M485.5 865.5L702.5 865.5L702.5 801.5M662.5 841.5L678.5 841.5L678.5 672.5M662.5 890.5L662.5 898.5L783.5 898.5M742.5 898.5L742.5 914.5M742.5 954.5L742.5 962.5M702.5 737.5L702.5 769.5M678.5 737.5L742.5 737.5M726.5 737.5L726.5 753.5M726.5 793.5L726.5 801.5L807.5 801.5M807.5 568.5L807.5 697.5M807.5 745.5L807.5 753.5M807.5 793.5L807.5 857.5M807.5 906.5L807.5 914.5M807.5 954.5L807.5 962.5M807.5 809.5L847.5 809.5M887.5 809.5L927.5 809.5L927.5 825.5M911.5 568.5L911.5 608.5M911.5 648.5L911.5 865.5M911.5 906.5L911.5 962.5M807.5 849.5L839.5 849.5M766.5 817.5L807.5 817.5M718.5 817.5L718.5 849.5L765.5 849.5M769.5 849.5L791.5 849.5L791.5 817.5M662.5 568.5L662.5 576.5M662.5 616.5L662.5 624.5L678.5 624.5M710.5 648.5L718.5 648.5M718.5 568.5L718.5 576.5M718.5 640.5L718.5 656.5M718.5 697.5L718.5 713.5" fill="none" stroke="#0c0c94" stroke-width="1.25"/>
<path d="M542.5 568.5L542.5 581.5M542.5 612.5L542.5 616.5M542.5 588.5L542.5 605.5M540.5 598.5L544.5 598.5L542.5 605.5L540.5 598.5M381.5 777.5L381.5 782.5M381.5 813.5L381.5 817.5M377.5 787.5L385.5 787.5M381.5 783.5L381.5 791.5M377.5 807.5L385.5 807.5M373.5 833.5L389.5 833.5L381.5 841.5L373.5 833.5M453.5 769.5L459.5 769.5M459.5 757.5H461.5V781.5H459.5ZM461.5 761.5L485.5 745.5M461.5 777.5L485.5 793.5M461.5 760.5L470.5 752.5L474.5 756.5L461.5 760.5M485.5 881.5L485.5 885.5L493.5 890.5L477.5 898.5L493.5 906.5L477.5 914.5L485.5 918.5L485.5 922.5M622.5 769.5L616.5 769.5M614.5 757.5H616.5V781.5H614.5ZM614.5 761.5L590.5 745.5M614.5 777.5L590.5 793.5M614.5 760.5L605.5 752.5L601.5 756.5L614.5 760.5M630.5 785.5L630.5 789.5L638.5 793.5L622.5 801.5L638.5 809.5L622.5 817.5L630.5 821.5L630.5 825.5M622.5 833.5L638.5 833.5L630.5 841.5L622.5 833.5M630.5 865.5L636.5 865.5M636.5 853.5H638.5V877.5H636.5ZM638.5 857.5L662.5 841.5M638.5 874.5L662.5 890.5M662.5 890.5L648.5 885.5L652.5 881.5L662.5 890.5M742.5 914.5L742.5 918.5L750.5 922.5L734.5 930.5L750.5 938.5L734.5 946.5L742.5 950.5L742.5 954.5M702.5 769.5L702.5 783.5M694.5 783.5L710.5 783.5M694.5 787.5L710.5 787.5M702.5 787.5L702.5 801.5M742.5 737.5L747.5 737.5M778.5 737.5L783.5 737.5M752.5 733.5L752.5 741.5M768.5 737.5L776.5 737.5M772.5 733.5L772.5 741.5M726.5 753.5L726.5 757.5L734.5 761.5L718.5 769.5L734.5 777.5L718.5 785.5L726.5 789.5L726.5 793.5M807.5 697.5L807.5 705.5L791.5 705.5M791.5 701.5L791.5 709.5M791.5 717.5L791.5 725.5M791.5 733.5L791.5 741.5M787.5 705.5L787.5 737.5M783.5 737.5L787.5 737.5M791.5 737.5L807.5 737.5L807.5 745.5M791.5 721.5L807.5 721.5L807.5 737.5M798.5 719.5L803.5 719.5L803.5 723.5L798.5 723.5L794.5 721.5L798.5 719.5M807.5 753.5L807.5 757.5L815.5 761.5L799.5 769.5L815.5 777.5L799.5 785.5L807.5 789.5L807.5 793.5M807.5 857.5L807.5 865.5L791.5 865.5M791.5 861.5L791.5 869.5M791.5 877.5L791.5 885.5M791.5 894.5L791.5 902.5M787.5 865.5L787.5 898.5M783.5 898.5L787.5 898.5M791.5 898.5L807.5 898.5L807.5 906.5M791.5 881.5L807.5 881.5L807.5 898.5M798.5 879.5L803.5 879.5L803.5 883.5L798.5 883.5L794.5 881.5L798.5 879.5M807.5 914.5L807.5 918.5L815.5 922.5L799.5 930.5L815.5 938.5L799.5 946.5L807.5 950.5L807.5 954.5M887.5 809.5L883.5 809.5L879.5 817.5L871.5 801.5L863.5 817.5L855.5 801.5L851.5 809.5L847.5 809.5M919.5 825.5L935.5 825.5L927.5 833.5L919.5 825.5M911.5 608.5L911.5 613.5M911.5 644.5L911.5 648.5M907.5 618.5L915.5 618.5M911.5 614.5L911.5 622.5M907.5 638.5L915.5 638.5M911.5 865.5L911.5 870.5M911.5 901.5L911.5 906.5M907.5 875.5L915.5 875.5M911.5 871.5L911.5 879.5M907.5 895.5L915.5 895.5M839.5 842.5L862.5 842.5L869.5 849.5L862.5 856.5L839.5 856.5L839.5 842.5M766.5 817.5L762.5 817.5L758.5 809.5L750.5 825.5L742.5 809.5L734.5 825.5L730.5 817.5L726.5 817.5M765.5 841.5L765.5 857.5M769.5 841.5L769.5 857.5M662.5 576.5L662.5 580.5L670.5 584.5L654.5 592.5L670.5 600.5L654.5 608.5L662.5 612.5L662.5 616.5M710.5 648.5L704.5 648.5M702.5 636.5H704.5V660.5H702.5ZM702.5 640.5L678.5 624.5M702.5 656.5L678.5 672.5M702.5 639.5L693.5 631.5L689.5 635.5L702.5 639.5M718.5 576.5L718.5 586.5M710.5 586.5L726.5 586.5L718.5 598.5L710.5 586.5M710.5 598.5L726.5 598.5M718.5 598.5L718.5 608.5M718.5 608.5L718.5 618.5M710.5 618.5L726.5 618.5L718.5 630.5L710.5 618.5M710.5 630.5L726.5 630.5M718.5 630.5L718.5 640.5M718.5 656.5L718.5 660.5L726.5 664.5L710.5 672.5L726.5 680.5L710.5 689.5L718.5 693.5L718.5 697.5M710.5 713.5L726.5 713.5L718.5 721.5L710.5 713.5" fill="none" stroke="#0c0c74" stroke-width="1"/>
<g fill="none" stroke="#0c0c74" stroke-width="1"><circle cx="542.5" cy="596.5" r="15.4"/><circle cx="381.5" cy="797.5" r="15.4"/><circle cx="762.5" cy="737.5" r="15.4"/><circle cx="911.5" cy="628.5" r="15.4"/><circle cx="911.5" cy="885.5" r="15.4"/></g>
<g fill="#0000f0"><rect x="660.0" y="566.0" width="5" height="5"/><rect x="716.0" y="566.0" width="5" height="5"/><rect x="805.0" y="566.0" width="5" height="5"/><rect x="540.0" y="743.0" width="5" height="5"/><rect x="483.0" y="863.0" width="5" height="5"/><rect x="588.0" y="960.0" width="5" height="5"/><rect x="740.0" y="960.0" width="5" height="5"/><rect x="805.0" y="960.0" width="5" height="5"/><rect x="628.0" y="767.0" width="5" height="5"/><rect x="628.0" y="863.0" width="5" height="5"/><rect x="676.0" y="735.0" width="5" height="5"/><rect x="740.0" y="896.0" width="5" height="5"/><rect x="700.0" y="735.0" width="5" height="5"/><rect x="724.0" y="735.0" width="5" height="5"/><rect x="805.0" y="799.0" width="5" height="5"/><rect x="805.0" y="807.0" width="5" height="5"/><rect x="805.0" y="815.0" width="5" height="5"/><rect x="805.0" y="847.0" width="5" height="5"/><rect x="909.0" y="807.0" width="5" height="5"/><rect x="716.0" y="815.0" width="5" height="5"/><rect x="789.0" y="815.0" width="5" height="5"/><rect x="716.0" y="646.0" width="5" height="5"/></g>
<text class="d" textLength="123.5" lengthAdjust="spacingAndGlyphs" x="340.5" y="580">.options plotwinsize=0</text>
<text class="d" textLength="77" lengthAdjust="spacingAndGlyphs" x="360" y="595.75">.four 1K v(out)</text>
<text class="d" textLength="78" lengthAdjust="spacingAndGlyphs" x="360" y="612">.tran 0 5m 0 1µ</text>
<text class="d" textLength="109" lengthAdjust="spacingAndGlyphs" x="352.5" y="627.5">;ac dec 100 1K 100e6</text>
<text x="553.75" y="579.6">I2</text>
<text x="553.75" y="623.75">9.5m</text>
<text x="672" y="591.5">R9</text>
<text x="672" y="609.75">9.1</text>
<text x="701" y="580.5">D6</text>
<text x="683.75" y="615.6">1N914</text>
<text x="722" y="611.5">D5</text>
<text x="722" y="647.5">1N914</text>
<text x="631" y="641.6">2P3019</text>
<text x="654" y="660.5">Q3</text>
<text x="727.75" y="672.5">R8</text>
<text x="727.75" y="690.6">2K</text>
<text x="756.25" y="717.5">V4</text>
<text x="755" y="763.75">3.7</text>
<text x="811" y="716.5">M1</text>
<text x="811" y="736.6">IRF530</text>
<text x="923.75" y="611.5">V1</text>
<text x="923" y="656">20</text>
<text x="817" y="768.5">R3</text>
<text x="817" y="787">0.47</text>
<text x="856.6" y="797.75">R11</text>
<text x="861" y="827.5">10</text>
<text x="840" y="852.5">out</text>
<text x="705.6" y="776.5">C1</text>
<text x="706" y="805">47p</text>
<text x="736" y="768">R1</text>
<text x="736" y="786">68</text>
<text x="738.75" y="805.6">R6</text>
<text x="737" y="835">470</text>
<text x="760" y="837.5">C2</text>
<text x="757" y="867">8p2</text>
<text x="494.5" y="763">BC557C</text>
<text x="538.75" y="763">BC557C</text>
<text x="495" y="781.25">Q4</text>
<text x="565.75" y="781">Q2</text>
<text x="393.75" y="780.75">V3</text>
<text x="392.5" y="824.5">SINE(0 1.5 1K)</text>
<text x="392.5" y="838.75">AC 1</text>
<text x="639.75" y="800.25">R5</text>
<text x="640" y="818.5">51</text>
<text x="657.75" y="860.6">Q1</text>
<text x="657.75" y="879.6">2N2219A</text>
<text x="494.75" y="897.5">R7</text>
<text x="494.75" y="915.6">1K2</text>
<text x="811" y="877.5">M2</text>
<text x="811" y="897.5">IRF530</text>
<text x="752" y="929.6">R2</text>
<text x="752" y="947.25">68</text>
<text x="817" y="929.6">R4</text>
<text x="817" y="947.25">0.47</text>
<text x="923.5" y="868.5">V2</text>
<text x="923" y="913.5">20</text>
</svg>
<svg width="1280" height="1000" viewBox="0 0 1280 1000" font-family='"Liberation Sans",sans-serif'>
<g transform="translate(2 1)"><rect width="16" height="16" fill="#d8d4d0"/><path d="M7.6 2.8H6L.2 11.4V12.7H6.5L5 9.4L3.2 10.4Z" fill="#980000"/><path d="M9.2 3H15.4L13.2 6.4L9.4 12.7H8L11.4 6.6Z" fill="#980000"/></g>
<g fill="#000"><rect x="1232" y="11" width="6" height="2"/><path d="M1250 5h6v5h-2v-1h1v-2h-4v1h-1zM1248 8h6v5h-6zM1249 10v2h4v-2z" fill-rule="evenodd"/><path d="M1266 5.5h2l2 2.2 2-2.2h2l-3 3.3 3 3.2h-2l-2-2.2-2 2.2h-2l3-3.2z"/></g>
<g fill="#000"><rect x="1226" y="112" width="6" height="2"/><path d="M1241 105h9v9h-9zM1242 107v6h7v-6z" fill-rule="evenodd"/><path d="M1260 106h2l2 2.2 2-2.2h2l-3 3.3 3 3.2h-2l-2-2.2-2 2.2h-2l3-3.2z"/></g>
<g fill="#000"><rect x="1226" y="551" width="6" height="2"/><path d="M1241 544h9v9h-9zM1242 546v6h7v-6z" fill-rule="evenodd"/><path d="M1260 545h2l2 2.2 2-2.2h2l-3 3.3 3 3.2h-2l-2-2.2-2 2.2h-2l3-3.2z"/></g>
<g transform="translate(107 74)"><rect x="0" y="0" width="16" height="16" fill="#f0f0f0"/><rect x="3" y="0" width="13" height="13" fill="#c4ccc4"/><path d="M2.5 0V13.5H16" stroke="#000" fill="none" stroke-width="1"/><path d="M0 1.5h2M0 4.5h2M0 7.5h2M0 10.5h2M4.5 14v2M7.5 14v2M10.5 14v2M13.5 14v2" stroke="#000" stroke-width="1"/><path d="M3.5 8.5L6.5 4.2L9.5 5.4L11.5 7.2L15.5 2.8" stroke="#e00020" stroke-width="1.7" fill="none"/></g>
<g transform="translate(8 101)"><rect x="0" y="0" width="16" height="16" fill="#f0f0f0"/><rect x="3" y="0" width="13" height="13" fill="#c4ccc4"/><path d="M2.5 0V13.5H16" stroke="#000" fill="none" stroke-width="1"/><path d="M0 1.5h2M0 4.5h2M0 7.5h2M0 10.5h2M4.5 14v2M7.5 14v2M10.5 14v2M13.5 14v2" stroke="#000" stroke-width="1"/><path d="M3.5 8.5L6.5 4.2L9.5 5.4L11.5 7.2L15.5 2.8" stroke="#e00020" stroke-width="1.7" fill="none"/></g>
<g transform="translate(11.5 72)"><g transform="scale(1.0)" stroke="#0808a8" fill="none"><path d="M0 7.5H4" stroke-width="1.6"/><path d="M4.5 3V12" stroke-width="2"/><path d="M5 6L10.5 0.5" stroke-width="1.4"/><path d="M5 9L11 15" stroke-width="1.4"/><path d="M7 12.8l3.5-.8-.8 3.5z" fill="#0808a8" stroke="none"/></g></g>
<g opacity=".6">
<g transform="translate(8 541.5)"><g transform="scale(1.0)" stroke="#0000f0" fill="none"><path d="M0 7.5H4" stroke-width="1.6"/><path d="M4.5 3V12" stroke-width="2"/><path d="M5 6L10.5 0.5" stroke-width="1.4"/><path d="M5 9L11 15" stroke-width="1.4"/><path d="M7 12.8l3.5-.8-.8 3.5z" fill="#0000f0" stroke="none"/></g></g>
</g>
<g transform="translate(17 46)"><path d="M.6.6H9.5L13.4 4.4V14.4H.6Z" fill="#fff" stroke="#000" stroke-width="1.2"/><path d="M9.5.6V4.4H13.4" fill="none" stroke="#000"/><g transform="translate(1.2 2.6) scale(.72)" fill="#e00020"><path d="M7.6 2.8H5.6L.2 11.4V12.7H6.5L5 9.4L3.2 10.4Z"/><path d="M9.2 3H15.8L13.4 6.6L9.6 12.7H7.6L11.2 6.8Z"/></g></g>
<g transform="translate(40 46.5)"><path d="M.6 11.6V3.2H2L3 2H6L7 3.2H10.5V6" fill="#f4f4a8" stroke="#000" stroke-width="1.1"/><path d="M.6 11.8L4 6H15L11 11.8Z" fill="#8c8c18" stroke="#000" stroke-width="1.1"/><path d="M9 2.2C10.5.3 13 .3 14 2.6" fill="none" stroke="#000" stroke-width="1.1"/><path d="M15.2 1L14.6 4.2L12 3Z" fill="#000"/></g>
<g transform="translate(71 46)"><rect x=".6" y=".6" width="13.2" height="13.2" fill="#8a8a20" stroke="#000" stroke-width="1.2"/><rect x="3" y="1.2" width="8" height="5.8" fill="#d8d8d0"/><rect x="3" y="8.5" width="8.5" height="5" fill="#000"/><rect x="8.6" y="9.6" width="2" height="3.2" fill="#e8e8e0"/><rect x="11.8" y="1.6" width="1.2" height="1.4" fill="#d8d8d0"/></g>
<g transform="translate(101 46)"><path d="M.6 3.2C1.5 1 4 .5 6 1.5H10C13 .6 15.5 2.6 15.6 6.6L14 6C13.5 4.6 12.5 4.4 11 5V7H5.8V5C4 4 2.5 4.5 1.5 6L.6 5Z" fill="#e8e8e8" stroke="#000" stroke-width="1"/><rect x="6.2" y="7.2" width="4.4" height="7.4" fill="#0010c8" stroke="#000070" stroke-width=".8"/></g>
<g transform="translate(131.5 45.6)"><g stroke="#000" fill="none" stroke-linecap="round"><circle cx="12" cy="2.2" r="1.4" fill="#000" stroke-width=".8"/><path d="M10.8 4.4L6.6 9.6" stroke-width="2.2"/><path d="M5 4.6L9.5 5L12 7.4L14.6 6.6" stroke-width="1.4"/><path d="M6.8 9.4L9.6 11.4L8.4 15" stroke-width="1.5"/><path d="M6.6 9.4L3.2 10.6L.8 10.4" stroke-width="1.5"/><path d="M1 3.2L3.4 2.4" stroke="#909090" stroke-width="1"/></g></g>
<g transform="translate(157 46)"><path d="M4.5 14.5L1 9.5C.4 8.4 1.6 7.6 2.6 8.6L4 10V3C4 1.8 5.8 1.8 5.8 3V7V1.6C5.8.4 7.6.4 7.6 1.6V7V2.2C7.6 1 9.4 1 9.4 2.2V7.4V4C9.4 2.8 11.2 2.8 11.2 4V11L10.4 14.5Z" transform="translate(1 1)" fill="none" stroke="#fff" stroke-width="1"/><path d="M4.5 14.5L1 9.5C.4 8.4 1.6 7.6 2.6 8.6L4 10V3C4 1.8 5.8 1.8 5.8 3V7V1.6C5.8.4 7.6.4 7.6 1.6V7V2.2C7.6 1 9.4 1 9.4 2.2V7.4V4C9.4 2.8 11.2 2.8 11.2 4V11L10.4 14.5Z" fill="none" stroke="#888" stroke-width="1"/></g>
<g transform="translate(186 45.6)"><circle cx="6.6" cy="6.4" r="5" fill="#c4ecec" stroke="#000" stroke-width="1.1"/><path d="M10.4 10.2L15 14.6" stroke="#000" stroke-width="2.1"/><path d="M3.6 6.4H9.6M6.6 3.4V9.4" stroke="#000" stroke-width="1.1"/></g>
<g transform="translate(209 45.6)"><circle cx="6.6" cy="6.4" r="5" fill="#dcdcd8" stroke="#fff" stroke-width="1.2" transform="translate(.8 .8)"/><circle cx="6.6" cy="6.4" r="5" fill="#d8d8d4" stroke="#888" stroke-width="1.2"/><path d="M10.6 10.4L15 14.6" stroke="#fff" stroke-width="2.2" transform="translate(.8 .8)"/><path d="M10.6 10.4L15 14.6" stroke="#888" stroke-width="2.2"/></g>
<g transform="translate(232.2 45.6)"><circle cx="6.6" cy="6.4" r="5" fill="#c4ecec" stroke="#000" stroke-width="1.1"/><path d="M10.4 10.2L15 14.6" stroke="#000" stroke-width="2.1"/><path d="M3.6 6.4H9.6" stroke="#000" stroke-width="1.1"/></g>
<g transform="translate(254.5 45.6)"><circle cx="6.6" cy="6.4" r="5" fill="#c4ecec" stroke="#000" stroke-width="1.1"/><path d="M10.4 10.2L15 14.6" stroke="#000" stroke-width="2.1"/><path d="M1 1L12.5 12M12.5 .5L1.5 12.5" stroke="#e00020" stroke-width="1.5"/></g>
<g transform="translate(285.5 45.6)"><path d="M2.5 0V13H16.5" stroke="#000" fill="none" stroke-width="1.2"/><path d="M0 1.5h2M0 4.5h2M0 7.5h2M0 10.5h2M5 13.5v1.5M8 13.5v1.5M11 13.5v1.5M14 13.5v1.5" stroke="#000"/><path d="M3 3.5L6 1L9 3L12 .8L15.5 3.5" stroke="#000" fill="none" stroke-width="1.1"/><path d="M3 6.5L7 5.2L11 6.6L16 5.8V8L11 8.4L7 7.4L3 8.4Z" fill="#ffb0b8"/><path d="M3 6.8L7 5.6L11 7L16 6.2" stroke="#e00020" fill="none" stroke-width="1.2"/><path d="M3 10.2L6 9.6L8 10.8L11 9.8L16 10.4" stroke="#101060" fill="none" stroke-width="1.2"/></g>
<g transform="translate(309 45.6)"><g fill="none"><path d="M2.5 0V13H16.5M0 1.5h2M0 4.5h2M0 7.5h2M0 10.5h2M5 13.5v1.5M8 13.5v1.5M11 13.5v1.5M14 13.5v1.5" stroke="#fff" transform="translate(1 1)"/><path d="M2.5 0V13H16.5M0 1.5h2M0 4.5h2M0 7.5h2M0 10.5h2M5 13.5v1.5M8 13.5v1.5M11 13.5v1.5M14 13.5v1.5" stroke="#909090"/><path d="M6 3L9 1.2H13V11H9L6 9Q4.5 6 6 3Z" stroke="#909090"/><path d="M14.5 1.5V10.5M13.4 3L14.5 1.5L15.6 3M13.4 9L14.5 10.5L15.6 9" stroke="#909090"/></g></g>
<g transform="translate(340 46)"><rect x="0.6" y="0.6" width="14.8" height="6.6" fill="#ececf4" stroke="#000080" stroke-width="1.1"/><rect x="0.6" y="0.6" width="14.8" height="2.4" fill="#000080"/><rect x="13.0" y="1.2999999999999998" width="1.2" height="1" fill="#fff"/><rect x="0.6" y="7.6" width="14.8" height="6.6" fill="#ececf4" stroke="#000080" stroke-width="1.1"/><rect x="0.6" y="7.6" width="14.8" height="2.4" fill="#000080"/><rect x="13.0" y="8.299999999999999" width="1.2" height="1" fill="#fff"/></g>
<g transform="translate(363 46)"><rect x="0.6" y="0.6" width="8.8" height="6.4" fill="#ececf4" stroke="#000080" stroke-width="1.1"/><rect x="0.6" y="0.6" width="8.8" height="2.4" fill="#000080"/><rect x="7.0" y="1.2999999999999998" width="1.2" height="1" fill="#fff"/><rect x="3.6" y="4.2" width="8.8" height="6.4" fill="#ececf4" stroke="#000080" stroke-width="1.1"/><rect x="3.6" y="4.2" width="8.8" height="2.4" fill="#000080"/><rect x="10.0" y="4.9" width="1.2" height="1" fill="#fff"/><rect x="6.6" y="7.8" width="8.8" height="6.6" fill="#ececf4" stroke="#000080" stroke-width="1.1"/><rect x="6.6" y="7.8" width="8.8" height="2.4" fill="#000080"/><rect x="13.0" y="8.5" width="1.2" height="1" fill="#fff"/></g>
<g transform="translate(386 46)"><rect x="0.6" y="0.6" width="7.8" height="6" fill="#ececf4" stroke="#000080" stroke-width="1.1"/><rect x="0.6" y="0.6" width="7.8" height="2.4" fill="#000080"/><rect x="6.0" y="1.2999999999999998" width="1.2" height="1" fill="#fff"/><rect x="3.2" y="4.2" width="7.8" height="6" fill="#ececf4" stroke="#000080" stroke-width="1.1"/><rect x="3.2" y="4.2" width="7.8" height="2.4" fill="#000080"/><rect x="8.6" y="4.9" width="1.2" height="1" fill="#fff"/><rect x="5.8" y="7.8" width="7.8" height="6.6" fill="#ececf4" stroke="#000080" stroke-width="1.1"/><rect x="5.8" y="7.8" width="7.8" height="2.4" fill="#000080"/><rect x="11.2" y="8.5" width="1.2" height="1" fill="#fff"/><rect x="7.4" y="11.4" width="4.6" height="1.6" fill="#000080"/><path d="M13 1H16M13.2 .8V4M13.2 1L16.8 4.8" stroke="#000" stroke-width="1.1" fill="none"/></g>
<g transform="translate(420.5 46)"><path d="M1.4 0L7 9.6M8.8 0L3.2 9.6" stroke="#000" stroke-width="1.3" fill="none"/><ellipse cx="2.6" cy="11.8" rx="1.7" ry="2.3" fill="none" stroke="#1020c0" stroke-width="1.3"/><ellipse cx="7.6" cy="11.8" rx="1.7" ry="2.3" fill="none" stroke="#1020c0" stroke-width="1.3"/></g>
<g transform="translate(441 46)"><path d="M0.7 0.7h5l2.6 2.6v6h-7.6z" fill="#fff" stroke="#000080" stroke-width="1.2"/><path d="M2.3 3.9000000000000004h3M2.3 5.9h4.6M2.3 7.7h4.6" stroke="#000" stroke-width=".9"/><path d="M6.6 3.6h5l2.6 2.6v6h-7.6z" fill="#fff" stroke="#000080" stroke-width="1.2"/><path d="M8.2 6.800000000000001h3M8.2 8.8h4.6M8.2 10.6h4.6" stroke="#000" stroke-width=".9"/></g>
<g transform="translate(464 46)"><rect x=".8" y="1.6" width="11.6" height="11.4" fill="#8c8c8c" stroke="#808080"/><rect x="4" y=".4" width="5" height="2.6" fill="#d4d0c8" stroke="#808080" stroke-width=".8"/><path d="M4 3.8H9.5" stroke="#e8e8e8" stroke-width="1"/><rect x="7" y="7" width="7.4" height="6.6" fill="#d4d0c8" stroke="#fff" stroke-width="1.2"/><path d="M8.4 9.2h4.6M8.4 11.2h4.6" stroke="#909090" stroke-width=".9"/></g>
<g transform="translate(487 47)"><path d="M2.6 3L3.4 0H5.6L6.4 3L7 4.2H8.6L9.2 3L10 0H12.2L13 3L15.4 9V13.6H10V9H5.6V13.6H.2V9Z" fill="#000"/><rect x="1.6" y="11" width="1.4" height="1.6" fill="#fff"/><rect x="11.4" y="11" width="1.4" height="1.6" fill="#fff"/></g>
<g transform="translate(518 47)"><path d="M4 5V.6H10.6L12.6 2.4V5" fill="#fff" stroke="#000" stroke-width="1.1"/><path d="M5.4 2.4L8 3.4L10 1.6" stroke="#888" fill="none" stroke-width=".8"/><path d="M.6 12.6V6.6L2.4 4.8H13.4L15 6.6V12.6Z" fill="#fff" stroke="#000" stroke-width="1.2"/><rect x="3" y="6.6" width="9.6" height="4.6" fill="#a0a0a0"/><path d="M3 7.2h9.6M3 8.8h9.6M3 10.4h9.6" stroke="#fff" stroke-width=".7" stroke-dasharray="1 1"/></g>
<g transform="translate(540.5 46)"><path d="M3.6 6L5.6 .8H13L11.4 6" fill="#fff" stroke="#000" stroke-width="1.1"/><path d="M6.4 2.4H11.6M5.8 4H11" stroke="#888" stroke-width=".8"/><path d="M.8 8L3.6 5.8H13.6L15.4 7.2V11L12.6 13.8H.8Z" fill="#e8e8e0" stroke="#000" stroke-width="1.2"/><path d="M.8 8H12.6L15.4 6.6M12.6 8V13.8M1 10.4H12.4" stroke="#000" stroke-width="1" fill="none"/><path d="M2 12.2H11.6" stroke="#a8a860" stroke-width="1.2"/></g>
<g transform="translate(572.5 46)"><path d="M1 13.6H14.6" stroke="#1818e0" stroke-width="1.4"/><path d="M1 11.6L2.2 7.4L7.2 .6L9.8 2.4L4.8 9.4Z" fill="#f8e020" stroke="#000" stroke-width="1"/><path d="M1 11.6L1.8 9L3.4 10.4Z" fill="#000"/><path d="M6.4 1.8L9 3.6" stroke="#000" stroke-width="1"/></g>
<g transform="translate(594.4 46)"><path d="M7.2 0V6.4" stroke="#000" stroke-width="1.2"/><path d="M.6 6.4H13.8L7.2 14Z" fill="#c8c89c" stroke="#000" stroke-width="1.1"/></g>
<g transform="translate(617.5 47)"><rect x=".7" y=".7" width="13.4" height="8.4" rx="1.2" fill="#e8e8c0" stroke="#000" stroke-width="1.3"/><path d="M7.4 9.4V13.6" stroke="#000" stroke-width="1.2"/><text x="7.4" y="7.6" font-size="7.5" font-weight="bold" text-anchor="middle" fill="#000">A</text></g>
<g transform="translate(643 46)"><path d="M6.6 0L9.2 3L1.6 8.4L6 12.2L7 14.6" fill="none" stroke="#000" stroke-width="1.3"/></g>
<g transform="translate(665 46)"><path d="M5.6 0V6M5.6 9.6V14.6M0 6H11.2M0 9.6H11.2" stroke="#000" stroke-width="1.3" fill="none"/></g>
<g transform="translate(690 46)"><path d="M1.4.6C6.4.8 6.4 6.8 2.6 7.2C6.6 7.6 6.6 13.8 1.4 14.2" fill="none" stroke="#000" stroke-width="1.4"/></g>
<g transform="translate(710 46)"><path d="M7.5 0V14.6" stroke="#000" stroke-width="1.2"/><path d="M1 3.4H14L7.5 11Z" fill="#d8d8d8" stroke="#000" stroke-width="1.1"/><path d="M.4 11H14.6" stroke="#000" stroke-width="1.3"/></g>
<g transform="translate(732 47.4)"><path d="M0 3.4H4M0 8.6H4M11.6 6H15.6" stroke="#000" stroke-width="1.2"/><path d="M4 .6H8C14.6 .6 14.6 11.4 8 11.4H4Z" fill="#d8d8d0" stroke="#000" stroke-width="1.3"/></g>
<g transform="translate(755 45.4)"><path d="M5 14.6L1.4 9.8C.2 8 .4 6.6 1.8 6.6L3.6 8.4L1.6 3.6C1.2 2.2 2.8 1.6 3.6 3L5.4 6.4L4.6 1.6C4.4.2 6.2-.2 6.6 1.4L7.8 6L8.4 1.4C8.6 0 10.4.2 10.4 1.6L10.4 6.4L12.4 3C13.2 1.8 14.8 2.6 14.2 4L12.4 9.6C12 12 11.6 13.4 11 14.6Z" fill="#fff" stroke="#000" stroke-width="1.1"/></g>
<g transform="translate(779 48.4)"><path d="M3.6 11.2L1 7.4C0 5.6 1 4.4 2.4 5.2L3 3C3.4 1.4 5 1.4 5.4 2.6C5.8.8 7.8.8 8.2 2.4C8.8 1 10.6 1.4 10.8 3C11.6 2.4 13 3 12.8 4.6L12.2 8L10.6 11.2Z" fill="#fff" stroke="#000" stroke-width="1.2"/><path d="M5.4 2.8V5M8.2 2.6V5M10.8 3.2V5.2" stroke="#000" stroke-width=".9"/></g>
<g transform="translate(802 46)"><path d="M3.2 5.2A5.2 5.2 0 1 1 4.6 12.4" fill="none" stroke="#000" stroke-width="1.4"/><path d="M.6 2.4L1 7.4L5.8 6Z" fill="#000"/></g>
<g transform="translate(825.5 46)"><g transform="translate(.9 .9)"><path d="M10.8 5.2A5.2 5.2 0 1 0 9.4 12.4" fill="none" stroke="#fff" stroke-width="1.4"/><path d="M13.4 2.4L13 7.4L8.2 6Z" fill="#fff"/></g><path d="M10.8 5.2A5.2 5.2 0 1 0 9.4 12.4" fill="none" stroke="#909090" stroke-width="1.4"/><path d="M13.4 2.4L13 7.4L8.2 6Z" fill="#909090"/></g>
<g transform="translate(847 46)"><path d="M1.4 6V14H5M1.4 10H4.4M8 14V8.4H14.6V14M11.2 8.4V12M3 4C5 .8 10 .4 12.4 3.2M12.8 1L12.6 3.8L10 3.4" transform="translate(1 1)" fill="none" stroke="#fff" stroke-width="1.3"/><path d="M1.4 6V14H5M1.4 10H4.4M8 14V8.4H14.6V14M11.2 8.4V12M3 4C5 .8 10 .4 12.4 3.2M12.8 1L12.6 3.8L10 3.4" fill="none" stroke="#909090" stroke-width="1.3"/></g>
<g transform="translate(870 46)"><path d="M1.4 6V14H5M1.4 10H4.4M14.6 6V14H11M14.6 10H11.6M3 4C5 .8 10 .4 12.8 3.4M13.2 1L13 4L10.2 3.4" transform="translate(1 1)" fill="none" stroke="#fff" stroke-width="1.3"/><path d="M1.4 6V14H5M1.4 10H4.4M14.6 6V14H11M14.6 10H11.6M3 4C5 .8 10 .4 12.8 3.4M13.2 1L13 4L10.2 3.4" fill="none" stroke="#909090" stroke-width="1.3"/></g>
<text x="892.6" y="58.6" font-family='"Liberation Serif",serif' font-weight="bold" font-style="italic" font-size="14.5" fill="#000">Aa</text>
<text x="916.2" y="57.2" font-size="12.5" fill="#000" stroke="#000" stroke-width=".25"><tspan dy="-4.6">.</tspan><tspan dy="4.6">op</tspan></text>
</svg>
</div></body></html>
